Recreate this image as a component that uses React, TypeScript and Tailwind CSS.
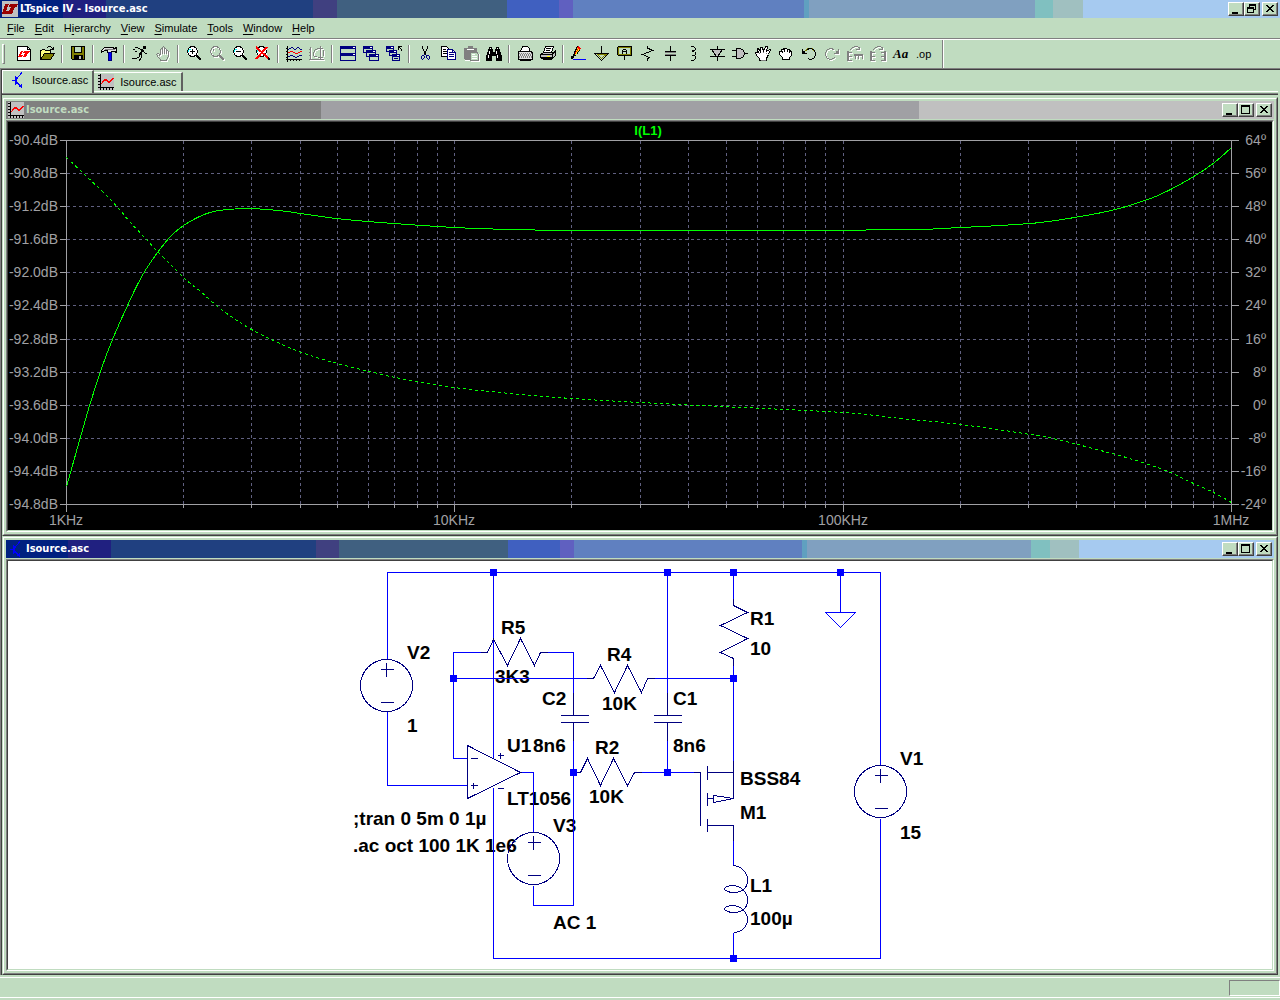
import React from 'react';
import clsx from 'clsx';

const ACTIVE_BAR =
  'bg-[linear-gradient(90deg,#002080_4.9%,#202080_4.9%_8.3%,#204080_8.3%_24.45%,#404080_24.45%_26.3%,#406080_26.3%_39.6%,#4060c0_39.6%_43.7%,#6060c0_43.7%_44.8%,#6080c0_44.8%_62.8%,#60a0c0_62.8%_63.2%,#80a0c0_63.2%_80.85%,#80c0c0_80.85%_82.3%,#a0c0c0_82.3%_84.6%,#a6caf0_84.6%)]';
const INACTIVE_BAR = 'bg-[linear-gradient(90deg,#808080_24.85%,#a0a0a4_24.85%_72%,#c0c0c0_72%)]';

const Glyph: React.FC<{ children: React.ReactNode }> = ({ children }) => (
  <svg width="16" height="16" viewBox="0 0 16 16" fill="none" stroke="#000" shapeRendering="crispEdges" className="shrink-0 overflow-visible" aria-hidden="true">
    {children}
  </svg>
);

// greyed out icon: white copy one pixel down-right under the grey one
const Disabled: React.FC<{ children: React.ReactNode }> = ({ children }) => (
  <Glyph>
    <g stroke="#fff" transform="translate(1 1)">{children}</g>
    <g stroke="#808080">{children}</g>
  </Glyph>
);

const TransistorIcon = () => (
  <Glyph>
    <path stroke="#0000ff" d="M2 8.5H6M5.5 4V13M6.5 5V12M7 6.5L12 .5M7 10.5L12 15.5M9 14.5H12M11.5 12V16M9.5 12V14" />
  </Glyph>
);

const PlotIcon = () => (
  <Glyph>
    <path fill="#c0c0c0" stroke="none" d="M0 0H16V16H0Z" />
    <path d="M2.5 0V16M0 13.5H16M0 1.5H2M0 4.5H2M0 7.5H2M0 10.5H2M5.5 14V16M8.5 14V16M11.5 14V16M14.5 14V16" />
    <path stroke="#ff0000" d="M3 9.5H4M4 8.5H5M4 7.5H6M5 6.5H9M6 5.5H9M9 6.5H10M9 7.5H13M10 8.5H12M12 6.5H14M13 5.5H15M14 4.5H16" />
  </Glyph>
);

const LogoIcon = () => (
  <Glyph>
    <path fill="#c0c0c0" stroke="none" d="M0 0H16V16H0Z" />
    <path fill="#990000" stroke="none" d="M3 3H7L4 10H8L7 13H0ZM8 3H16L15 6H13L10 13H6L9 6H7Z" />
  </Glyph>
);

const Lens = () => (
  <>
    <path stroke="none" fill="#fff" d="M4 1H9L12 4V8L9 11H4L1 8V4Z" />
    <path stroke="#00ffff" d="M3 3.5H5M2.5 4V6M8 9.5H10M10.5 7V9" />
    <path d="M4 .5H9M4 10.5H9M1.5 4V7M11.5 4V7M1.5 3.5H3M2.5 2V4M3 1.5H5M8 1.5H10M10.5 2V4M2.5 7V9M3 9.5H5M8 9.5H10M10.5 7V9" />
    <path strokeWidth="2" d="M10 9L15 14" />
  </>
);

const NewIcon = () => (
  <Glyph>
    <path fill="#fff" d="M1.5 .5H11.5L14.5 3.5V14.5H1.5Z" />
    <path d="M11.5 .5V3.5H14.5" />
    <path fill="#ff0000" stroke="none" d="M5 5H7L5 9H7L6 11H2ZM8 5H14L13 7H12L10 11H7L9 7H7Z" />
  </Glyph>
);

const OpenIcon = () => (
  <Glyph>
    <path fill="#ffff80" d="M1.5 13.5V4.5H2.5L3.5 3.5H5.5L6.5 4.5H11.5V7.5" />
    <path fill="#808000" d="M1.5 13.5L5.5 7.5H15.5L11.5 13.5Z" />
    <path d="M8 1.5H9M9 .5H12M12 1.5H13M13.5 2V4M11 3.5H15M14.5 1V3" />
  </Glyph>
);

const SaveIcon = () => (
  <Glyph>
    <path fill="#808000" d="M1.5 .5H14.5V13.5H2.5L1.5 12.5Z" />
    <path fill="#c0dcc0" d="M4.5 .5H11.5V6.5H4.5Z" />
    <path fill="#000" d="M4.5 9.5H12.5V13.5H4.5Z" />
    <path stroke="#c0c0c0" strokeWidth="2" d="M10 10V13" />
  </Glyph>
);

const HammerIcon = () => (
  <Glyph>
    <path fill="#e0e0e0" d="M.5 4.5L3.5 1.5H11.5L13.5 2.5L15.5 1.5V6.5L13.5 5.5H10.5V6.5H6.5V4.5H3.5L.5 6.5Z" />
    <path stroke="#808080" d="M4 3.5H14" />
    <path fill="#0000ff" stroke="#000080" d="M7.5 6.5H10.5V14.5H7.5Z" />
  </Glyph>
);

const RunIcon = () => (
  <Glyph>
    <path fill="#000" stroke="none" d="M11 0H14V3H11Z" />
    <path strokeWidth="2" d="M11 4L8 8" />
    <path d="M3 1.5H6M6 2.5H8M8 3.5H11M11.5 5.5L13.5 7.5H15M7 8.5H10M7.5 9V11M5 11.5H7M0 12.5H5M9.5 9V12M8.5 12V14M7.5 13V15M1 3.5H3M3 5.5H5" />
  </Glyph>
);

const HaltIcon = () => (
  <Disabled>
    <path d="M5.5 15V13M11.5 15V13M5 14.5H12M4.5 12V13M3.5 11V12M2.5 9V11M1.5 8V9M2 7.5H4M4.5 8V10M5.5 3V9M7.5 1V8M9.5 1V8M11.5 3V8M13.5 5V11M12.5 11V13M6 2.5H7M8 .5H9M10 2.5H11M12 4.5H13" />
  </Disabled>
);

const ZoomInIcon = () => (
  <Glyph>
    <Lens />
    <path d="M6.5 3V8M4 5.5H9" />
  </Glyph>
);

const ZoomOutIcon = () => (
  <Glyph>
    <Lens />
    <path d="M4 5.5H9" />
  </Glyph>
);

const ZoomFitIcon = () => (
  <Glyph>
    <Lens />
    <path stroke="#ff0000" strokeWidth="2" d="M1 1L13 12M12 1L1 13" />
  </Glyph>
);

const ZoomPanIcon = () => (
  <Disabled>
    <path d="M4 .5H9M4 10.5H9M1.5 4V7M11.5 4V7M2.5 2V4M3 1.5H5M8 1.5H10M10.5 2V4M2.5 7V9M3 9.5H5M8 9.5H10M10.5 7V9M4.5 3V5" />
    <path strokeWidth="2" d="M10 9L15 14" />
  </Disabled>
);

const TracesIcon = () => (
  <Glyph>
    <path d="M1.5 0V16M0 13.5H16M0 2.5H2M0 5.5H2M0 8.5H2M0 11.5H2M4.5 13V15M7.5 13V15M10.5 13V15M13.5 13V15" />
    <path stroke="#000080" d="M2 3.5H3M3 2.5H5M5 1.5H7M7 2.5H8M8 3.5H10M10 2.5H11M11 1.5H13M13 2.5H14M14 3.5H16" />
    <path stroke="#ff0000" d="M2 6.5H4M4 5.5H7M7 6.5H9M9 7.5H12M12 6.5H14M14 5.5H16" />
    <path stroke="#000080" d="M2 10.5H4M4 9.5H7M7 10.5H9M9 11.5H11M11 10.5H13M13 9.5H16" />
  </Glyph>
);

const AutorangeIcon = () => (
  <Disabled>
    <path d="M1.5 1V14M0 13.5H15M0 3.5H2M0 6.5H2M0 9.5H2M11.5 0V13M9 2.5H14M9 11.5H14M4.5 6V10M5.5 4V6M6 3.5H8M8 2.5H10M5 10.5H8M14.5 4V10" />
  </Disabled>
);

const MiniWindow: React.FC<{ x: number; y: number; w: number; h: number }> = ({ x, y, w, h }) => (
  <>
    <rect x={x + 0.5} y={y + 0.5} width={w - 1} height={h - 1} fill="#c0dcc0" stroke="#000080" />
    <path stroke="#000080" strokeWidth="3" d={`M${x} ${y + 1.5}H${x + w}`} />
    <path stroke="#fff" d={`M${x + w - 3} ${y + 1.5}H${x + w - 1}`} />
  </>
);

const TileIcon = () => (
  <Glyph>
    <MiniWindow x={0} y={0} w={16} h={8} />
    <MiniWindow x={0} y={7} w={16} h={8} />
  </Glyph>
);

const CascadeIcon = () => (
  <Glyph>
    <MiniWindow x={0} y={0} w={10} h={7} />
    <MiniWindow x={3} y={4} w={10} h={7} />
    <MiniWindow x={6} y={8} w={10} h={7} />
  </Glyph>
);

const CloseAllIcon = () => (
  <Glyph>
    <MiniWindow x={0} y={0} w={8} h={6} />
    <MiniWindow x={3} y={4} w={8} h={6} />
    <MiniWindow x={6} y={8} w={8} h={7} />
    <path stroke="#000080" d="M8 12.5H12" />
    <path d="M12 .5H16M12.5 0V4M13 1.5H14M14.5 2V3M15.5 3V5" />
  </Glyph>
);

const CutIcon = () => (
  <Glyph>
    <path d="M5.5 0V3M6.5 3V5M7.5 5V8M8.5 5V9M9.5 3V5M10.5 0V3" />
    <path stroke="#000080" d="M7.5 8V9M5 9.5H7M4.5 10V13M7.5 10V12M6.5 12V13M5 13.5H6M9 9.5H12M9.5 10V12M12.5 10V13M10.5 12V13M11 13.5H12" />
  </Glyph>
);

const CopyIcon = () => (
  <Glyph>
    <path fill="#fff" d="M1.5 .5H6.5L9.5 3.5V10.5H1.5Z" />
    <path d="M3 3.5H6M3 5.5H8M3 7.5H8" />
    <path fill="#fff" stroke="#000080" d="M7.5 3.5H12.5L15.5 6.5V13.5H7.5Z" />
    <path stroke="#000080" d="M9 6.5H12M9 8.5H14M9 10.5H14M12.5 4V6.5H15" />
  </Glyph>
);

const PasteIcon = () => (
  <Glyph>
    <path fill="#808080" stroke="none" d="M1 2H5V0H10V2H14V6H15V14H2L1 13Z" />
    <path stroke="#fff" d="M4 3.5H11M2 14.5H7M16.5 8V16M8 15.5H17" />
    <path fill="#c0dcc0" stroke="#808080" d="M7.5 6.5H13.5L15.5 8.5V14.5H7.5Z" />
    <path stroke="#fff" d="M9 8.5H12M9 10.5H14M9 12.5H14" />
  </Glyph>
);

const FindIcon = () => (
  <Glyph>
    <path fill="#000" stroke="none" d="M3 1H6V3H7V6H9V3H10V1H13V3H14V6H15V9H16V15H10V10H6V15H0V9H1V6H2V3H3Z" />
    <path stroke="#fff" d="M3.5 5V8M2.5 9V12M10.5 5V8M11.5 9V12M4 2.5H5M11 2.5H12" />
  </Glyph>
);

const PreviewIcon = () => (
  <Glyph>
    <path fill="#fff" d="M3.5 5.5L5.5 .5H10.5L12.5 2.5V5.5" />
    <path fill="#e0e0e0" d="M1.5 5.5H14.5L15.5 7.5V13.5H1.5V7.5Z" />
    <path stroke="#808080" strokeDasharray="1 1" d="M2 7.5H15M3 9.5H15M2 11.5H15M3 8.5H15M2 10.5H15" />
    <path d="M2 13.5H15M3 14.5H14" />
  </Glyph>
);

const PrintIcon = () => (
  <Glyph>
    <path fill="#fff" d="M3.5 6.5L5.5 .5H13.5L11.5 6.5" />
    <path d="M6 2.5H11M6 4.5H10" />
    <path fill="#c0c0c0" d="M.5 8.5L3.5 6.5H13.5L15.5 4.5V9.5L12.5 12.5H2.5L.5 11.5Z" />
    <path d="M1 8.5H12L15 6M1 11.5H12M12.5 9V13" />
    <path stroke="#ffff00" d="M7 10.5H10" />
    <path d="M3 13.5H12" />
  </Glyph>
);

const WireIcon = () => (
  <Glyph>
    <path fill="#ffff00" d="M2.5 10.5L3.5 6.5L6.5 .5L9.5 2.5L5.5 8.5Z" />
    <path fill="#ff0000" stroke="none" d="M6 1L7 0L10 2L9 4L6 2Z" />
    <path stroke="#ff0000" d="M4 7.5L7 3.5" />
    <path strokeWidth="2" d="M1 13V11H3" />
    <path stroke="#0000ff" d="M2 13.5H15" />
  </Glyph>
);

const GroundIcon = () => (
  <Glyph>
    <path d="M7.5 0V7M0 7.5H15M1.5 8.5L7.5 14.5L13.5 8.5" />
    <path stroke="#808000" d="M3 8.5H12L7.5 12.5L3.5 8.5" />
  </Glyph>
);

const NetLabelIcon = () => (
  <Glyph>
    <path stroke="#808000" d="M1 1.5H14M1 8.5H14M1.5 1V9M13.5 1V9" />
    <path d="M1 .5H15M1 9.5H15M.5 1V9M14.5 1V9M7.5 10V14M5.5 4V8M9.5 4V8M6 3.5H9M6 5.5H9" />
  </Glyph>
);

const ResistorIcon = () => (
  <Glyph>
    <path d="M7.5 0V2L12.5 4.5L2.5 8.5L9.5 11.5L7.5 13V15" />
  </Glyph>
);

const CapacitorIcon = () => (
  <Glyph>
    <path d="M7.5 0V6M7.5 9V15M2 5.5H13M2 9.5H13" />
    <path stroke="#808080" d="M2 6.5H13M2 8.5H13" />
  </Glyph>
);

const InductorIcon = () => (
  <Glyph>
    <path d="M5 .5H8M8.5 1V2M9.5 2V4M6 4.5H9M6 5.5H8M9.5 6V9M6 9.5H9M9.5 10V13M8.5 13V14M5 14.5H8" />
  </Glyph>
);

const DiodeIcon = () => (
  <Glyph>
    <path fill="#c0c0c0" d="M2.5 3.5H13.5L8.5 10.5H7.5Z" />
    <path d="M8.5 0V4M8.5 10V15M1 10.5H16M1 3.5H16" />
  </Glyph>
);

const GateIcon = () => (
  <Glyph>
    <path fill="#c0c0c0" d="M4.5 2.5H8.5L11.5 4.5L12.5 7.5L11.5 10.5L8.5 12.5H4.5Z" />
    <path d="M0 4.5H4M0 10.5H4M12 7.5H16" />
  </Glyph>
);

const MoveIcon = () => (
  <Glyph>
    <path fill="#fff" d="M4.5 14.5V12.5L1.5 9.5L.5 6.5H3.5L2.5 4.5V2.5L4.5 3.5L5.5 6.5L5.5 1.5H7.5L8.5 5.5L10.5 .5H12.5L11.5 5.5L14.5 3.5H15.5L13.5 8.5L12.5 10.5L11.5 12.5V14.5Z" />
    <path stroke="#808080" d="M6 14.5H11M4.5 7V8M8.5 6V7M11.5 7V8" />
  </Glyph>
);

const DragIcon = () => (
  <Glyph>
    <path fill="#fff" d="M4.5 13.5V11.5L1.5 8.5V5.5H3.5V3.5H5.5V2.5H8.5L9.5 3.5H11.5V4.5L13.5 5.5V9.5L11.5 11.5V13.5Z" />
    <path d="M6.5 3V6M9.5 4V6M4.5 5V7M11.5 5V7" />
  </Glyph>
);

const UndoIcon = () => (
  <Glyph>
    <path stroke="#808000" d="M4 4.5H5L7 2.5H11L13 4.5" />
    <path d="M1.5 3V8M2 7.5H6M2.5 5V7M3.5 5V7M6 3.5H8M7 2.5H11M11 3.5H13M13.5 4V6M14.5 6V10M13.5 10V12M11 12.5H13M8 13.5H11M7 12.5H8" />
  </Glyph>
);

const RedoIcon = () => (
  <Disabled>
    <path d="M14.5 3V8M10 7.5H14M13.5 5V7M12.5 5V7M8 3.5H10M5 2.5H9M3 3.5H5M2.5 4V6M1.5 6V10M2.5 10V12M3 12.5H5M5 13.5H8M8 12.5H10M10.5 11V12" />
  </Disabled>
);

const RotateIcon = () => (
  <Disabled>
    <path strokeWidth="2" d="M1 5V15M7 9H16" />
    <path d="M1 6.5H5M1 10.5H5M1 14.5H5M8.5 9V13M11.5 9V13M15.5 9V13M3 3.5H4M4 2.5H5M5 1.5H7M7 .5H11M11 1.5H12M12.5 1V4M9 3.5H13" />
  </Disabled>
);

const MirrorIcon = () => (
  <Disabled>
    <path strokeWidth="2" d="M1 5V15M15 5V15" />
    <path d="M1 6.5H5M1 10.5H5M1 14.5H5M11 6.5H15M11 10.5H15M11 14.5H15M3 3.5H4M4 2.5H5M5 1.5H7M7 .5H11M11 1.5H12M12.5 1V4M9 3.5H13" />
  </Disabled>
);

interface Tool {
  name: string;
  icon: React.ReactNode;
  disabled?: boolean;
}

const toolGroups: Tool[][] = [
  [{ name: 'New Schematic', icon: <NewIcon /> }, { name: 'Open', icon: <OpenIcon /> }],
  [{ name: 'Save', icon: <SaveIcon /> }],
  [{ name: 'Control Panel', icon: <HammerIcon /> }],
  [
    { name: 'Run', icon: <RunIcon /> },
    { name: 'Halt', icon: <HaltIcon />, disabled: true },
  ],
  [
    { name: 'Zoom In', icon: <ZoomInIcon /> },
    { name: 'Pan', icon: <ZoomPanIcon />, disabled: true },
    { name: 'Zoom Out', icon: <ZoomOutIcon /> },
    { name: 'Zoom Full Extents', icon: <ZoomFitIcon /> },
  ],
  [
    { name: 'Pick Visible Traces', icon: <TracesIcon /> },
    { name: 'Autorange', icon: <AutorangeIcon />, disabled: true },
  ],
  [
    { name: 'Tile Windows', icon: <TileIcon /> },
    { name: 'Cascade Windows', icon: <CascadeIcon /> },
    { name: 'Close All Windows', icon: <CloseAllIcon /> },
  ],
  [
    { name: 'Cut', icon: <CutIcon /> },
    { name: 'Copy', icon: <CopyIcon /> },
    { name: 'Paste', icon: <PasteIcon />, disabled: true },
    { name: 'Find', icon: <FindIcon /> },
  ],
  [{ name: 'Print Preview', icon: <PreviewIcon /> }, { name: 'Print', icon: <PrintIcon /> }],
  [
    { name: 'Wire', icon: <WireIcon /> },
    { name: 'Ground', icon: <GroundIcon /> },
    { name: 'Label Net', icon: <NetLabelIcon /> },
    { name: 'Resistor', icon: <ResistorIcon /> },
    { name: 'Capacitor', icon: <CapacitorIcon /> },
    { name: 'Inductor', icon: <InductorIcon /> },
    { name: 'Diode', icon: <DiodeIcon /> },
    { name: 'Component', icon: <GateIcon /> },
    { name: 'Move', icon: <MoveIcon /> },
    { name: 'Drag', icon: <DragIcon /> },
    { name: 'Undo', icon: <UndoIcon /> },
    { name: 'Redo', icon: <RedoIcon />, disabled: true },
    { name: 'Rotate', icon: <RotateIcon />, disabled: true },
    { name: 'Mirror', icon: <MirrorIcon />, disabled: true },
    { name: 'Text', icon: <span className="font-['Liberation_Serif',serif] text-[13px] font-bold italic leading-4">Aa</span> },
    { name: 'SPICE Directive', icon: <span className="text-[11px] leading-4">.op</span> },
  ],
];

const menus = ['File', 'Edit', 'Hierarchy', 'View', 'Simulate', 'Tools', 'Window', 'Help'];
// index of the underlined access key in each menu name
const accessKey: Record<string, number> = { Hierarchy: 1 };

const Divider = () => <span className="mx-[3px] h-[18px] w-[2px] shrink-0 border-l border-[#808080] bg-white" />;

const CaptionButton: React.FC<{ label: string; className?: string; children: React.ReactNode }> = ({ label, className, children }) => (
  <button
    aria-label={label}
    className={clsx(
      'flex h-[14px] w-4 items-center justify-center border border-t-white border-l-white border-r-[#404040] border-b-[#404040] bg-[#c0dcc0] shadow-[inset_-1px_-1px_#808080]',
      className
    )}
  >
    <svg width="14" height="12" viewBox="0 0 14 12" fill="none" stroke="#000" shapeRendering="crispEdges" aria-hidden="true">
      {children}
    </svg>
  </button>
);

const TitleBar: React.FC<{ title: string; icon: React.ReactNode; active?: boolean; restored?: boolean }> = ({ title, icon, active = false, restored = false }) => (
  <div
    className={clsx(
      "flex h-[18px] items-center gap-[2px] px-[2px] font-['DejaVu_Sans_Condensed','DejaVu_Sans',sans-serif] text-[11px] font-bold leading-[18px]",
      active ? `${ACTIVE_BAR} text-white` : `${INACTIVE_BAR} text-[#c0dcc0]`
    )}
  >
    {icon}
    <h2 className="flex-1 truncate">{title}</h2>
    <div className="flex shrink-0">
      <CaptionButton label="Minimize">
        <path strokeWidth="2" d="M3 10H9" />
      </CaptionButton>
      {restored ? (
        <CaptionButton label="Restore">
          <path d="M5 1.5H11M4.5 1V4M5 2.5H11M10.5 1V7M8 6.5H11M2.5 4.5H8.5V9.5H2.5ZM2 5.5H9" />
        </CaptionButton>
      ) : (
        <CaptionButton label="Maximize">
          <path d="M2.5 1.5H10.5V9.5H2.5ZM2 2.5H11" />
        </CaptionButton>
      )}
      <CaptionButton label="Close" className="ml-[2px]">
        <path d="M3 2.5H5M9 2.5H11M4 3.5H6M8 3.5H10M5 4.5H9M6 5.5H8M5 6.5H9M4 7.5H6M8 7.5H10M3 8.5H5M9 8.5H11" />
      </CaptionButton>
    </div>
  </div>
);

const ChildWindow: React.FC<{ title: string; icon: React.ReactNode; active?: boolean; dark?: boolean; children: React.ReactNode }> = ({ title, icon, active, dark, children }) => (
  <section className="flex grow flex-col border border-t-[#c0dcc0] border-l-[#c0dcc0] border-r-[#404040] border-b-[#404040]">
    <div className="flex grow flex-col border border-t-white border-l-white border-r-[#808080] border-b-[#808080] p-[2px]">
      <TitleBar title={title} icon={icon} active={active} />
      <div className="mt-px flex grow flex-col border border-t-[#808080] border-l-[#808080] border-r-white border-b-white">
        <div className={clsx('grow border border-t-[#404040] border-l-[#404040] border-r-[#c0dcc0] border-b-[#c0dcc0]', dark ? 'bg-black' : 'bg-white')}>
          {children}
        </div>
      </div>
    </div>
  </section>
);

type Point = [number, number];

const magnitude: Point[] = [
  [66, 486], [70, 472], [79, 440], [90, 402], [99, 374], [108, 349], [118, 325], [128, 303], [135, 288], [143, 273], [150, 262],
  [157, 252], [164, 243], [171, 235], [183, 225], [199, 216], [213, 211], [228, 209], [246, 208], [267, 209], [287, 211], [300, 213],
  [336, 218], [380, 222], [454, 227], [510, 229], [571, 230], [620, 230], [840, 230], [870, 229], [920, 229], [960, 227], [1000, 225],
  [1040, 222], [1080, 216], [1115, 209], [1150, 198], [1170, 189], [1195, 175], [1214, 162], [1231, 147],
];

const phase: Point[] = [
  [66, 157], [84, 174], [106, 195], [119, 209], [129, 221], [144, 237], [158, 252], [183, 277], [200, 291], [217, 306], [235, 319],
  [251, 329], [271, 339], [293, 349], [316, 357], [337, 363], [369, 371], [400, 378], [454, 387], [510, 393], [571, 398], [640, 402],
  [720, 406], [842, 412], [900, 418], [960, 424], [1030, 434], [1061, 440], [1115, 454], [1145, 463], [1170, 472], [1193, 483],
  [1213, 492], [1231, 502],
];

const toPath = (pts: Point[]) => {
  let d = `M${pts[0][0]} ${pts[0][1]}`;
  for (let i = 0; i < pts.length - 1; i++) {
    const p0 = pts[i - 1] || pts[i];
    const p1 = pts[i];
    const p2 = pts[i + 1];
    const p3 = pts[i + 2] || p2;
    d += `C${p1[0] + (p2[0] - p0[0]) / 6} ${p1[1] + (p2[1] - p0[1]) / 6} ${p2[0] - (p3[0] - p1[0]) / 6} ${p2[1] - (p3[1] - p1[1]) / 6} ${p2[0]} ${p2[1]}`;
  }
  return d;
};

const LEFT = 66;
const RIGHT = 1231;
const TOP = 140;
const BOTTOM = 504;
const rows = Array.from({ length: 12 }, (_, i) => ({
  y: Math.round(TOP + (i * (BOTTOM - TOP)) / 11),
  db: `${(-90.4 - i * 0.4).toFixed(1)}dB`,
  deg: `${64 - i * 8}º`,
}));
const decades = ['1KHz', '10KHz', '100KHz', '1MHz'];
const xOf = (decade: number, n: number) => Math.round(LEFT + ((decade + Math.log10(n)) * (RIGHT - LEFT)) / 3);
const columns = [0, 1, 2].flatMap(decade => [1, 2, 3, 4, 5, 6, 7, 8, 9].map(n => xOf(decade, n))).slice(1);

const Waveform = () => (
  <svg viewBox="8 122 1264 408" className="block w-full font-['Liberation_Sans',sans-serif] text-[14px]" role="img" aria-label="I(L1)">
    <g transform="translate(.5 .5)" fill="none" shapeRendering="crispEdges">
      <g stroke="#606080" strokeDasharray="3 3">
        {rows.slice(1, -1).map(r => <path key={r.y} d={`M${LEFT} ${r.y}H${RIGHT}`} />)}
        {columns.map(x => <path key={x} d={`M${x} ${TOP}V${BOTTOM}`} />)}
      </g>
      <g stroke="#a0a0a4">
        <rect x={LEFT} y={TOP} width={RIGHT - LEFT} height={BOTTOM - TOP} />
        {rows.map(r => <path key={r.y} d={`M59 ${r.y}H${LEFT}M${RIGHT} ${r.y}H1238`} />)}
        {columns.map(x => <path key={x} d={`M${x} ${BOTTOM}V507`} />)}
        {decades.map((d, i) => <path key={d} d={`M${xOf(i, 1)} ${BOTTOM}V511`} />)}
      </g>
      <path stroke="#00ff00" d={toPath(magnitude)} />
      <path stroke="#00ff00" strokeDasharray="3 3" d={toPath(phase)} />
    </g>
    <g fill="#a0a0a4">
      {rows.map(r => (
        <React.Fragment key={r.y}>
          <text x="58" y={r.y + 5} textAnchor="end">{r.db}</text>
          <text x="1266" y={r.y + 5} textAnchor="end">{r.deg}</text>
        </React.Fragment>
      ))}
      {decades.map((d, i) => <text key={d} x={xOf(i, 1)} y="525" textAnchor="middle">{d}</text>)}
    </g>
    <text x="648" y="135" textAnchor="middle" fill="#00ff00" className="text-[13px] font-bold">I(L1)</text>
  </svg>
);

const junctions: Point[] = [[493, 572], [667, 572], [733, 572], [840, 572], [453, 678], [733, 678], [573, 772], [667, 772], [733, 958]];

const wires =
  'M387 658V572H880V765M880 818V958H493V787M387 711V785H467M493 572V758M487 652H453V758H467M453 678H593M541 652H573V714' +
  'M573 723V905H533V885M573 772H580M634 772H700M648 678H733M667 572V714M667 723V772M733 572V605M733 658V798M733 825V865M733 932V958' +
  'M520 772H533V832M840 572V612M825 612H855L840 627Z';

const parts = [
  // resistors R5, R4, R2, R1
  'M480 652H487L493 639L507 665L520 638L534 665L540 652H547',
  'M586 678H593L600 665L614 692L627 665L641 692L647 678H654',
  'M574 772H580L587 758L600 785L613 758L627 785L634 772H641',
  'M733 598V605L747 612L720 625L747 638L720 652L733 658V665',
  // capacitors C2, C1
  'M560 715H588M560 722H588M573 692V715M573 722V740',
  'M653 715H681M653 722H681M667 692V715M667 722V740',
  // op amp U1
  'M467 745V798L520 772ZM470 758H477M470 785H477M473 782V788M497 755H503M500 752V758M497 788H503',
  // M1
  'M693 772H700V825M707 765V779M707 792V805M707 818V831M707 772H733M707 798H713M713 795V802L733 798ZM707 825H733V840M733 760V798',
  // L1
  'M733 865C742 866 747 873 747 879C747 886 744 892 733 892C728 892 724 890 724 888C724 887 728 885 733 885C742 886 747 893 747 899C747 906 744 912 733 912C728 912 724 910 724 908C724 907 728 905 733 905C742 906 747 913 747 919C747 925 742 932 733 932',
];

const sources: Point[] = [[386, 685], [533, 858], [880, 791]];

const labels: [number, number, string][] = [
  [407, 659, 'V2'], [407, 732, '1'], [501, 634, 'R5'], [495, 683, '3K3'], [542, 705, 'C2'], [507, 752, 'U1'], [533, 752, '8n6'],
  [607, 661, 'R4'], [602, 710, '10K'], [595, 754, 'R2'], [589, 803, '10K'], [507, 805, 'LT1056'], [353, 825, ';tran 0 5m 0 1µ'],
  [353, 852, '.ac oct 100 1K 1e6'], [553, 832, 'V3'], [553, 929, 'AC 1'], [673, 705, 'C1'], [673, 752, '8n6'], [750, 625, 'R1'],
  [750, 655, '10'], [740, 785, 'BSS84'], [740, 819, 'M1'], [750, 892, 'L1'], [750, 925, '100µ'], [900, 765, 'V1'], [900, 839, '15'],
];

const Schematic = () => (
  <svg viewBox="8 561 1264 408" className="block w-full font-['Liberation_Sans',sans-serif] text-[19px] font-bold" role="img" aria-label="Schematic">
    <g fill="#000">
      {labels.map(([x, y, text]) => <text key={`${x}-${y}`} x={x} y={y}>{text}</text>)}
    </g>
    <g transform="translate(.5 .5)" fill="none" shapeRendering="crispEdges">
      <path stroke="#0000ff" d={wires} />
      <g stroke="#000080">
        {parts.map(d => <path key={d} d={d} />)}
        {sources.map(([x, y]) => (
          <React.Fragment key={x}>
            <circle cx={x} cy={y} r="26" />
            <path d={`M${x - 6} ${y - 16}H${x + 7}M${x} ${y - 23}V${y - 9}M${x - 6} ${y + 17}H${x + 7}`} />
          </React.Fragment>
        ))}
      </g>
      {junctions.map(([x, y]) => <rect key={`${x}-${y}`} x={x - 3.5} y={y - 3.5} width="7" height="7" fill="#0000ff" />)}
    </g>
  </svg>
);

const App: React.FC = () => (
  <div className="flex min-h-screen flex-col bg-[#c0dcc0] font-['Liberation_Sans',sans-serif] text-[11px] leading-4 text-black">
    <TitleBar title="LTspice IV - Isource.asc" icon={<LogoIcon />} active restored />

    <nav className="flex h-5 items-center gap-[10px] px-[7px]">
      {menus.map(m => {
        const k = accessKey[m] || 0;
        return (
          <button key={m}>
            {m.slice(0, k)}
            <span className="underline underline-offset-2">{m[k]}</span>
            {m.slice(k + 1)}
          </button>
        );
      })}
    </nav>

    <div className="flex h-[30px] items-stretch border-t border-[#808080]">
      <div className="flex grow items-center border-t border-white pl-[2px]">
        <span className="mr-[7px] h-5 w-[3px] border border-t-white border-l-white border-r-[#808080] border-b-[#808080]" />
        {toolGroups.map((group, i) => (
          <React.Fragment key={i}>
            {i > 0 && <Divider />}
            {group.map(t => (
              <button key={t.name} aria-label={t.name} disabled={t.disabled} className="flex h-[22px] w-[23px] shrink-0 items-center pl-1">
                {t.icon}
              </button>
            ))}
          </React.Fragment>
        ))}
        <span className="ml-[7px] w-[2px] self-stretch border-l border-[#808080] bg-white" />
      </div>
    </div>

    <main className="flex grow flex-col border-t border-l border-[#808080]">
      <div className="flex grow flex-col border-t border-l border-[#404040] pr-[2px]">
        <div className="flex h-[25px] flex-col border-b border-[#404040]">
          <div role="tablist" className="flex h-6 items-start border-b border-[#808080]">
            <button role="tab" aria-selected="true" className="flex h-[23px] items-start gap-[6px] border-t border-l border-r-2 border-t-white border-l-white border-r-[#606060] pt-px pr-1 pl-[7px]">
              <TransistorIcon />
              <span>Isource.asc</span>
            </button>
            <div className="flex h-[22px] grow items-end border-b border-white">
              <button role="tab" aria-selected="false" className="flex h-[19px] items-center gap-[6px] border-t border-r-2 border-t-white border-r-[#606060] pr-1 pl-1">
                <PlotIcon />
                <span>Isource.asc</span>
              </button>
            </div>
          </div>
        </div>

        <div className="mt-[2px] flex grow flex-col">
          <ChildWindow title="Isource.asc" icon={<PlotIcon />} dark>
            <Waveform />
          </ChildWindow>
          <ChildWindow title="Isource.asc" icon={<TransistorIcon />} active>
            <Schematic />
          </ChildWindow>
        </div>
      </div>
    </main>

    <footer className="mt-[2px] flex h-[23px] flex-col border-t border-white">
      <div className="flex h-5 justify-end border-b border-white pt-[2px] pb-px">
        <span className="w-[51px] border border-t-[#808080] border-l-[#808080] border-r-white border-b-white" />
      </div>
    </footer>
  </div>
);

export default App;
